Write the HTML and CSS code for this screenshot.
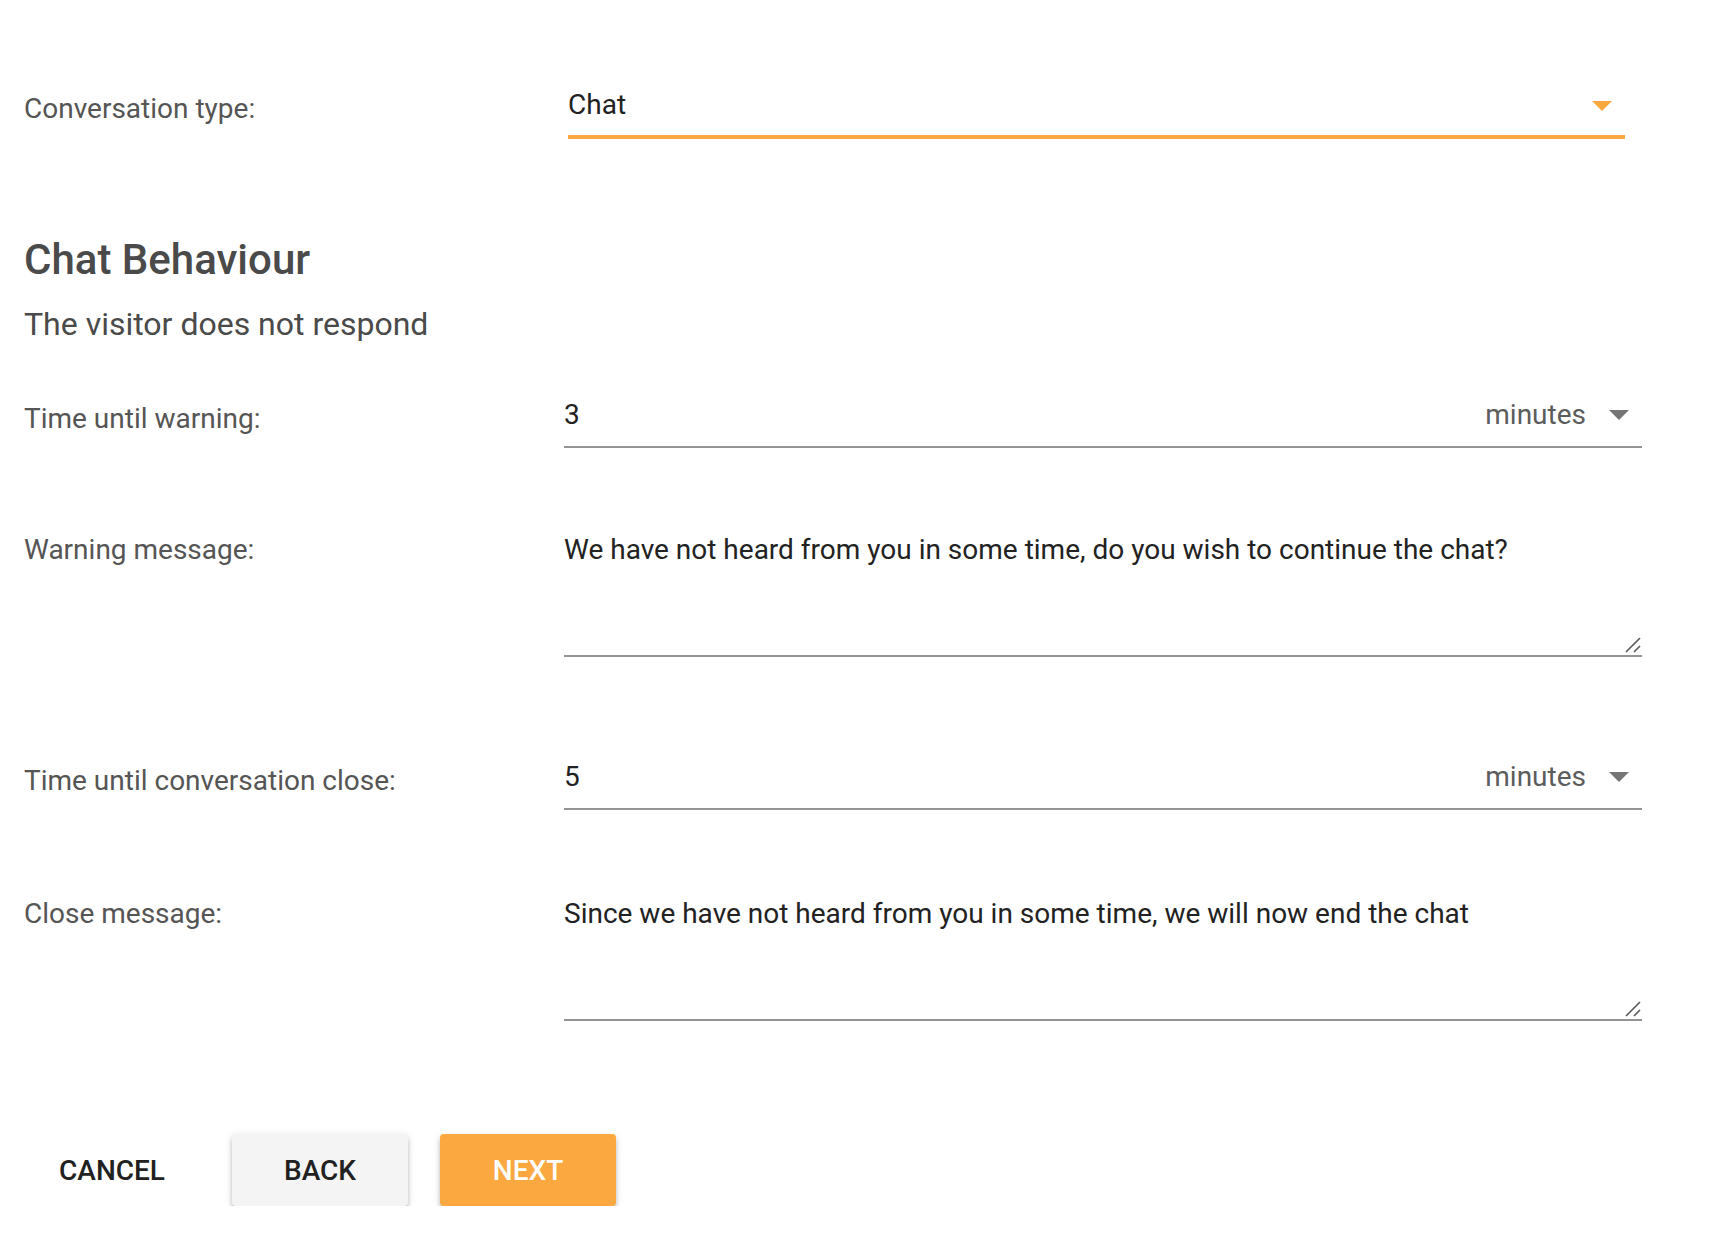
FILE: index.html
```html
<!DOCTYPE html>
<html lang="en">
<head>
<meta charset="utf-8">
<title>Chat Behaviour</title>
<link rel="stylesheet" href="styles.css">
</head>
<body>
<div class="page">
  <div class="row row-type">
    <div class="label">Conversation type:</div>
    <div class="select select-focused">
      <span class="select-value">Chat</span>
      <svg class="arrow" width="20" height="10" viewBox="0 0 20 10"><polygon points="0,0 20,0 10,10" fill="#fca840"/></svg>
    </div>
  </div>

  <h2 class="heading">Chat Behaviour</h2>
  <h3 class="subheading">The visitor does not respond</h3>

  <div class="row row-warning-time">
    <div class="label label-time">Time until warning:</div>
    <div class="field">
      <span class="field-value">3</span>
      <span class="unit">minutes</span>
      <svg class="arrow" width="20" height="10" viewBox="0 0 20 10"><polygon points="0,0 20,0 10,10" fill="#757575"/></svg>
    </div>
  </div>

  <div class="row row-warning-msg">
    <div class="label label-msg">Warning message:</div>
    <div class="area-wrap">
      <textarea class="area">We have not heard from you in some time, do you wish to continue the chat?</textarea>
      <svg class="grip" width="16" height="16" viewBox="0 0 16 16"><path d="M1 15 L15 1 M9 15 L15 9" stroke="#5a5a5a" stroke-width="1.6" fill="none"/></svg>
    </div>
  </div>

  <div class="row row-close-time">
    <div class="label label-time">Time until conversation close:</div>
    <div class="field">
      <span class="field-value">5</span>
      <span class="unit">minutes</span>
      <svg class="arrow" width="20" height="10" viewBox="0 0 20 10"><polygon points="0,0 20,0 10,10" fill="#757575"/></svg>
    </div>
  </div>

  <div class="row row-close-msg">
    <div class="label label-msg">Close message:</div>
    <div class="area-wrap">
      <textarea class="area">Since we have not heard from you in some time, we will now end the chat</textarea>
      <svg class="grip" width="16" height="16" viewBox="0 0 16 16"><path d="M1 15 L15 1 M9 15 L15 9" stroke="#5a5a5a" stroke-width="1.6" fill="none"/></svg>
    </div>
  </div>

  <div class="actions">
    <button class="btn btn-flat">CANCEL</button>
    <button class="btn btn-raised">BACK</button>
    <button class="btn btn-primary">NEXT</button>
  </div>
</div>
</body>
</html>
```

FILE: styles.css
```css
* { box-sizing: border-box; }
html, body { margin: 0; padding: 0; background: #ffffff; }
body { font-family: Roboto, "Noto Sans", "Liberation Sans", sans-serif; color: #222; }

.page { padding: 89px 24px 0 24px; }

.row { display: grid; grid-template-columns: 540px 1078px; align-items: start; }

.label { font-size: 28px; line-height: 32px; color: #555; margin-top: 4px; }
.label-time { margin-top: 4px; }
.label-msg { margin-top: 0; }

.select { margin-left: 4px; width: 1057px; display: flex; align-items: center; padding: 0 13px 14px 0; border-bottom: 4px solid #fca840; }
.select-value { flex: 1; font-size: 28px; line-height: 32px; color: #222; }
.select .arrow { margin-top: 2px; }

.heading { margin: 96px 0 0 0; font-size: 42px; line-height: 50px; font-weight: 500; color: #4a4a4a; }
.subheading { margin: 20px 0 0 0; font-size: 32px; line-height: 38px; font-weight: 400; color: #4a4a4a; }

.row-warning-time { margin-top: 56px; }
.row-warning-msg { margin-top: 86px; }
.row-close-time { margin-top: 104px; }
.row-close-msg { margin-top: 88px; }

.field { display: flex; align-items: center; padding: 0 13px 15px 0; border-bottom: 2px solid #949494; }
.field-value { flex: 1; font-size: 28px; line-height: 32px; color: #222; }
.unit { font-size: 28px; line-height: 32px; color: #5c5c5c; margin-right: 23px; }

.area-wrap { position: relative; width: 1078px; }
.area { display: block; width: 1078px; height: 123px; margin: 0; padding: 0; border: none; border-bottom: 2px solid #949494; outline: none; font-family: Roboto, "Noto Sans", "Liberation Sans", sans-serif; font-size: 28px; line-height: 32px; color: #222; background: transparent; resize: none; overflow: hidden; }
.grip { position: absolute; right: 1px; bottom: 4px; }

.actions { display: flex; gap: 32px; margin-top: 113px; }
.btn { width: 176px; height: 72px; border: none; border-radius: 4px; font-family: Roboto, "Noto Sans", "Liberation Sans", sans-serif; font-size: 28px; font-weight: 500; letter-spacing: 0; padding: 0; cursor: pointer; }
.btn-flat { background: transparent; color: #212121; }
.btn-raised { background: #f4f4f4; color: #212121; box-shadow: 0 4px 4px rgba(0,0,0,.2), 0 5px 2px -3px rgba(0,0,0,.25), 0 2px 8px rgba(0,0,0,.12); }
.btn-primary { background: #fca840; color: #ffffff; box-shadow: 0 4px 4px rgba(0,0,0,.2), 0 5px 2px -3px rgba(0,0,0,.25), 0 2px 8px rgba(0,0,0,.12); }
```
